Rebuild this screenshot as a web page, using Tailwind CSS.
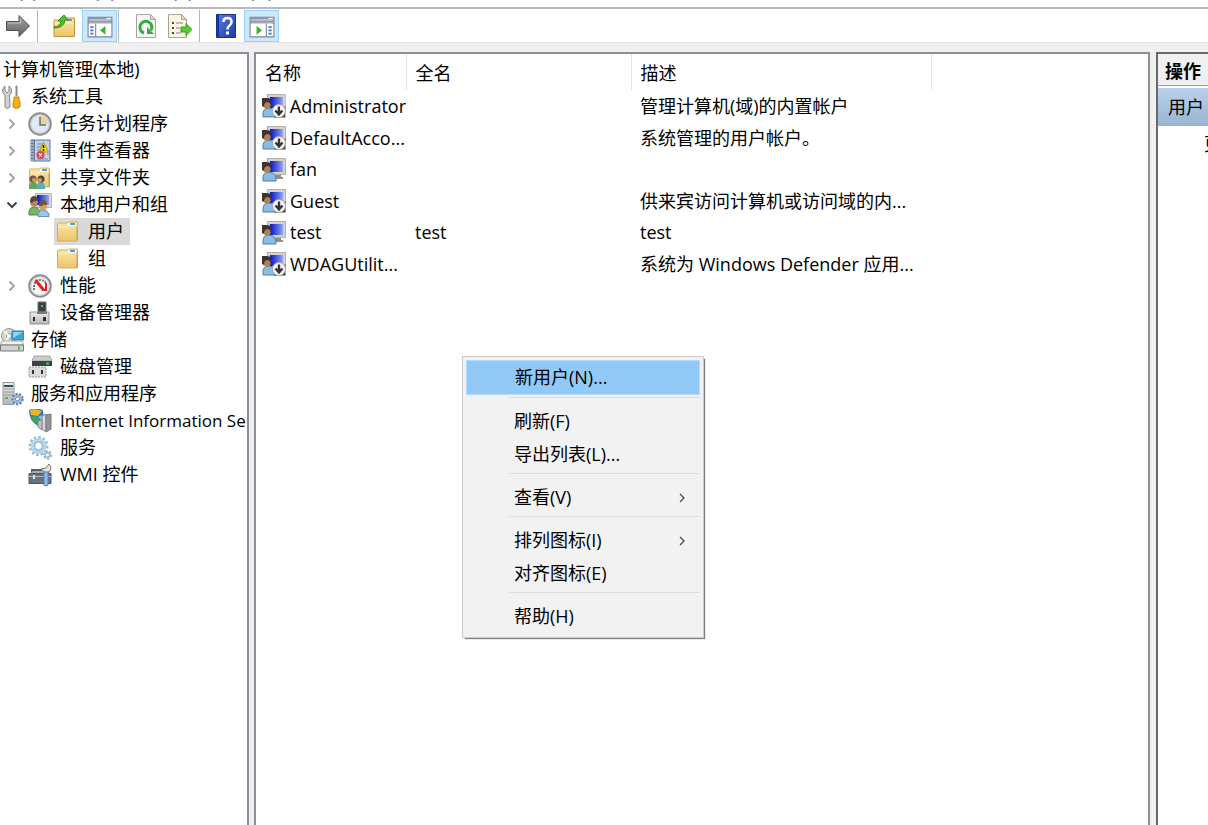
<!DOCTYPE html>
<html lang="zh-CN">
<head>
    <meta charset="UTF-8" />
    <meta name="viewport" content="width=device-width, initial-scale=1.0">
    <script src="https://cdn.jsdelivr.net/npm/@tailwindcss/browser@4"></script>
    <title>计算机管理</title>
</head>
<body class="h-screen flex flex-col overflow-hidden bg-[#f0f0f0] text-black text-[18px] leading-[27px] font-['Open_Sans','Noto_Sans_CJK_SC',sans-serif]">

<!-- Icons -->
<svg class="absolute size-0" aria-hidden="true">
    <defs>
        <linearGradient id="g-folder" x1="0" y1="0" x2="0" y2="1"><stop offset="0" stop-color="#fde9a8"/><stop offset="1" stop-color="#e9c46a"/></linearGradient>
        <linearGradient id="g-gray" x1="0" y1="0" x2="0" y2="1"><stop offset="0" stop-color="#a8a8a8"/><stop offset="1" stop-color="#5f5f5f"/></linearGradient>
        <linearGradient id="g-help" x1="0" y1="0" x2="1" y2="1"><stop offset="0" stop-color="#5a7ee0"/><stop offset="1" stop-color="#1c3aa8"/></linearGradient>
        <linearGradient id="g-screen" x1="0" y1="0" x2="1" y2="0"><stop offset="0" stop-color="#0a12c8"/><stop offset="1" stop-color="#8fa6f2"/></linearGradient>
        <linearGradient id="g-metal" x1="0" y1="0" x2="0" y2="1"><stop offset="0" stop-color="#ededed"/><stop offset="1" stop-color="#b4b6b8"/></linearGradient>
    </defs>
    <symbol id="folder" viewBox="0 0 24 24">
        <path d="M1.500 21V4q0-1 1-1h9l1-1h8q1 0 1 1v18z" fill="url(#g-folder)" stroke="#d3b05f"/>
        <path d="M12 3h8v3h-8z" fill="#fff"/><path d="M14 3h5v2h-5z" fill="#4a9be0"/>
        <path d="M2 7h9l2-2" stroke="#fff3c8" fill="none"/><path d="M21 7v13" stroke="#c79d49"/>
    </symbol>
    <symbol id="user" viewBox="0 0 24 24">
        <path d="M5 .5h18.500v16H8z" fill="#d6d3cb" stroke="#b3b0a8"/>
        <path d="M8 3h13v11H8z" fill="url(#g-screen)"/>
        <path d="M13 17h6v2h2v2h-8z" fill="#8f8f8f"/>
        <path d="M1 23v-4q0-4 5-5 7 0 8 6v3z" fill="#8cbbe4" stroke="#4d7fae"/>
        <ellipse cx="5" cy="10" rx="4" ry="5" fill="#b17f54"/>
        <path d="M0 12V4h5q5 0 5 6l-1 3q0-4-3-5-4 0-4 5z" fill="#39342f"/>
    </symbol>
    <symbol id="user-off" viewBox="0 0 24 24">
        <use href="#user"/>
        <path d="M23.500 12v11.500H12z" fill="#3c3c3c"/>
        <circle cx="17" cy="17" r="6.500" fill="#f7f7f7" stroke="#a9a9a9"/>
        <path d="M17 12.500v7M13.500 16.500l3.500 4 3.500-4" stroke="#333" stroke-width="2.400" fill="none"/>
    </symbol>
    <symbol id="users" viewBox="0 0 24 24">
        <path d="M7 .5h16.500v14H9z" fill="#d9d8d2" stroke="#b5b5ae"/>
        <path d="M9 2h12v10H9z" fill="url(#g-screen)"/>
        <path d="M1 22v-4q1-4 5-4t6 4v4z" fill="#78b467" stroke="#4f8d44"/>
        <ellipse cx="6" cy="9" rx="4" ry="5" fill="#b98858"/><path d="M2 9q0-6 4-6t4 5q-4-1-6 2z" fill="#5a4632"/>
        <path d="M10 23.500V21q1-4 5-4t6 4v2.500z" fill="#9cc6ea" stroke="#5d90bd"/>
        <ellipse cx="15" cy="13" rx="4" ry="5" fill="#d0a070"/><path d="M11 13q0-6 4-6t4 5q-4-1-5 1z" fill="#77552f"/>
    </symbol>
    <symbol id="tools" viewBox="0 0 24 24">
        <path d="M5 1v5l2 2 2-2V1q3 2 2.500 6-.5 2-2 3l.5 12q-3 3-5 0V10Q3 9 2.500 6 2.500 3 5 1z" fill="#d2d2d2" stroke="#858585"/>
        <path d="M16 1h1v10h-1z" fill="#999" stroke="#888"/>
        <path d="M14 12h5v3l1 2v5q-3.500 3-7 0v-5l1-2z" fill="#f2b01c" stroke="#c98804"/>
    </symbol>
    <symbol id="clock" viewBox="0 0 24 24">
        <circle cx="12" cy="12" r="10.800" fill="#e3ebf1" stroke="#8e8e8e" stroke-width="2"/>
        <circle cx="12" cy="12" r="9" fill="#dfeaf4" stroke="#c8ccd0"/>
        <path d="M12 12V3.500a8.500 8.500 0 0 1 8.500 8.500z" fill="#f3d394"/>
        <path d="M12 5v8h6" fill="none" stroke="#5d6f82" stroke-width="1.500"/>
    </symbol>
    <symbol id="events" viewBox="0 0 24 24">
        <path d="M3 1h19v21H3z" fill="#c4d1e8" stroke="#5a73a8"/><path d="M3 1h4v21H3z" fill="#66779c"/>
        <path d="M1 3h5M1 6h5M1 9h5M1 12h5M1 15h5M1 18h5M1 21h5" stroke="#d8dde6"/>
        <path d="M9 5h5M9 8h4M9 11h3M9 17h3M9 20h11M19 15h2" stroke="#7086b4"/>
        <path d="M15.500 3l5 10h-9z" fill="#f7d71d" stroke="#b79a0c"/><path d="M15.500 6v3M15.500 10v2" stroke="#222" stroke-width="1.500"/>
        <circle cx="12.500" cy="16" r="4" fill="#d8464c"/><path d="M11 14.500l3 3m0-3l-3 3" stroke="#fff" stroke-width="1.200"/>
    </symbol>
    <symbol id="share" viewBox="0 0 24 24">
        <use href="#folder"/>
        <path d="M1 23v-3q1-4 4-4t5 4v3z" fill="#5fa564"/><circle cx="5" cy="13" r="3.500" fill="#7a5234"/><circle cx="6" cy="14" r="2" fill="#cf9d70"/>
        <path d="M9 23v-3q1-4 4-4t4 4v3z" fill="#58b0bd"/><circle cx="13" cy="13" r="3.500" fill="#5a4434"/><circle cx="12" cy="14" r="2" fill="#cf9d70"/>
    </symbol>
    <symbol id="perf" viewBox="0 0 24 24">
        <circle cx="12" cy="12" r="10.800" fill="#f6f6f6" stroke="#8d8d8d" stroke-width="2"/>
        <circle cx="12" cy="12" r="9" fill="none" stroke="#cfcfcf"/>
        <path d="M6 16V11q2-5 6-5 6 0 6 5" fill="none" stroke="#6b7d70" stroke-width="2" stroke-dasharray="2 1"/>
        <path d="M7.500 6l8 10" stroke="#e21f26" stroke-width="3"/><path d="M14 16h4V9" fill="none" stroke="#e21f26" stroke-width="2"/>
    </symbol>
    <symbol id="device" viewBox="0 0 24 24">
        <path d="M10 1h8v11h-8z" fill="#3d3f41" stroke="#6d6f71"/><path d="M13 4h2v2h-2z" fill="#38d23a"/>
        <path d="M2 11h19v12H2z" fill="url(#g-metal)" stroke="#909294"/><path d="M9 11h10v2H9z" fill="#77797b"/>
        <path d="M5 16h2v4H5zM15 16h3v4h-3z" fill="#2e2e2e"/>
    </symbol>
    <symbol id="storage" viewBox="0 0 24 24">
        <circle cx="9" cy="8" r="7.500" fill="#d3dad6" stroke="#8f9894"/><circle cx="9" cy="8" r="2.500" fill="#fff" stroke="#8f9894"/><path d="M9 8l-5-5M9 8l-3 6" stroke="#f2f6e6" stroke-width="2"/>
        <path d="M12 3h12v9H12z" fill="#3ea4d2" stroke="#2a7ba5"/><path d="M13 4h10l-10 6z" fill="#8fd5f0"/>
        <path d="M2 13h20l2 4H0z" fill="#f0f0f0" stroke="#a9a9a9"/><path d="M.5 17h23v6H.5z" fill="#cfd1d3" stroke="#77797b"/>
        <path d="M18 18h2v4h-2z" fill="#4dd338"/>
    </symbol>
    <symbol id="disk" viewBox="0 0 24 24">
        <path d="M6 1h16l2 5H4z" fill="#c9cbcd" stroke="#a5a7a9"/><path d="M4 6h20v5H4z" fill="#3f4244"/><path d="M18 7.500h3v2h-3z" fill="#37d33a"/>
        <path d="M1 12h17v10H1z" fill="#dcdcdc" stroke="#9b9b9b" stroke-dasharray="2 1"/><path d="M4 15h2v4H4zM13 15h2v4h-2z" fill="#333"/>
    </symbol>
    <symbol id="services-apps" viewBox="0 0 24 24">
        <path d="M3 .5h11v22H3z" fill="url(#g-metal)" stroke="#8d979e"/><path d="M4 3h9v2H4z" fill="#34525c"/><path d="M4 7h9M4 10h9M4 13h9" stroke="#8b979e"/><path d="M5 15h3v2H5z" fill="#56b948"/>
        <circle cx="17.500" cy="17" r="5" fill="#a9c5e0" stroke="#5f87b3" stroke-width="2.500" stroke-dasharray="2 1.500"/><circle cx="17.500" cy="17" r="2" fill="#fff" stroke="#5f87b3"/>
    </symbol>
    <symbol id="iis" viewBox="0 0 24 24">
        <path d="M1 1q6-3 14 0l1 13-6 3Q1 12 1 1z" fill="#2476c4"/><path d="M2 1q6-2 12 1l-4 5-7-1z" fill="#f0b429"/><path d="M3 7l7 1 2 7-5-1q-3-3-4-7z" fill="#43a83d"/><path d="M10 8l4-2v6z" fill="#7cc6f2"/>
        <path d="M14 7l4-2v18l-4-3z" fill="#d7dadc" stroke="#85898c"/><path d="M18 6l5-1v15l-5 3z" fill="#8f9598" stroke="#777b7e"/><path d="M10 12l4-1v10l-4-3z" fill="#bec3c6" stroke="#85898c"/>
    </symbol>
    <symbol id="services" viewBox="0 0 24 24">
        <circle cx="10.500" cy="10" r="8.500" fill="none" stroke="#8fb9d9" stroke-width="3" stroke-dasharray="2.300 2.100"/>
        <circle cx="10.500" cy="10" r="6" fill="#fff" stroke="#b4d6ec" stroke-width="4"/><circle cx="10.500" cy="10" r="4" fill="#fff" stroke="#7aa5c8"/>
        <circle cx="19.500" cy="19" r="3" fill="#fff" stroke="#8db4d3" stroke-width="3" stroke-dasharray="2 1"/><circle cx="19.500" cy="19" r="2" fill="#fff" stroke="#8db4d3"/>
    </symbol>
    <symbol id="wmi" viewBox="0 0 24 24">
        <path d="M4 10V7h9v3" fill="none" stroke="#555d63" stroke-width="2"/><path d="M1 11l4-3h15l3 3z" fill="#a6b0b7"/>
        <path d="M1 10.500h22v10H1z" fill="#66737d" stroke="#4c565e"/><path d="M1 13.500h22" stroke="#aab4bb"/><path d="M5 12h2v4H5z" fill="#dfe4e7"/>
        <path d="M13 6l5-1 3-4 2 3-1 4-4 2z" fill="#e4e4e4" stroke="#777"/><path d="M16 9h4v13q-2 2-4 0z" fill="#8fc0ec" stroke="#4f81b3"/>
    </symbol>
    <symbol id="forward" viewBox="0 0 24 24">
        <path d="M.5 7.500H13V1.500L23.500 12 13 22.500v-6H.5z" fill="url(#g-gray)" stroke="#4f4f4f"/><path d="M2 9h12.500V5" fill="none" stroke="#c2c2c2"/>
    </symbol>
    <symbol id="folder-up" viewBox="0 0 24 24">
        <path d="M2 22.500V6h9l2-2h9.500v18.500z" fill="url(#g-folder)" stroke="#bf9440"/><path d="M15 5h5v2h-5z" fill="#5b9bd0"/><path d="M3 9h18" stroke="#fff0bd"/>
        <path d="M2 13q6 0 7-6H6l6-6 4 5h-3q-1 8-11 8z" fill="#4cc42c" stroke="#2f8f18"/>
    </symbol>
    <symbol id="pane-left" viewBox="0 0 24 24">
        <path d="M1 4h22v18H1z" fill="#fff" stroke="#7b8697"/><path d="M1 4h22v6H1z" fill="#8c98ab"/><path d="M2 6.500h20M2 9.500h20" stroke="#dfe4ea"/><path d="M18 5h4" stroke="#fff"/>
        <path d="M8 10v12" stroke="#7b8697"/><path d="M3 13h3M3 16h3M3 19h3" stroke="#3c78c8" stroke-width="1.500"/><path d="M17 12v8l-5-4z" fill="#3fae2a"/>
    </symbol>
    <symbol id="pane-right" viewBox="0 0 24 24">
        <path d="M1 4h22v18H1z" fill="#fff" stroke="#7b8697"/><path d="M1 4h22v6H1z" fill="#8c98ab"/><path d="M2 6.500h20M2 9.500h20" stroke="#dfe4ea"/><path d="M18 5h4" stroke="#fff"/>
        <path d="M16 10v12" stroke="#7b8697"/><path d="M18 13h3M18 16h3M18 19h3" stroke="#3c78c8" stroke-width="1.500"/><path d="M7 12v8l5-4z" fill="#3fae2a"/>
    </symbol>
    <symbol id="refresh" viewBox="0 0 24 24">
        <path d="M2.500.5h14l5 5v18h-19z" fill="#f6f6f6" stroke="#a4a4a4"/><path d="M16.500.5v5h5z" fill="#ddd" stroke="#a4a4a4"/>
        <path d="M10 19A6 6 0 1 1 17 16.500" fill="none" stroke="#2fae3c" stroke-width="3"/><path d="M13 20v-7l7 7z" fill="#2fae3c"/>
    </symbol>
    <symbol id="export" viewBox="0 0 24 24">
        <path d="M.5.5h13l5 5v18H.5z" fill="#fbf6e0" stroke="#a9a494"/><path d="M13.500.5v5h5z" fill="#e3dec8" stroke="#a9a494"/>
        <path d="M4 9h2M4 14h2M4 19h2" stroke="#444" stroke-width="2"/><path d="M8 9h7M8 14h4M8 19h5" stroke="#857fa0"/>
        <path d="M13 13h5V9.500l6 6-6 6V18h-5z" fill="#53cf34" stroke="#35a11d"/>
    </symbol>
    <symbol id="help" viewBox="0 0 24 24">
        <path d="M2.500.5h19v23h-19z" fill="url(#g-help)" stroke="#1b318f"/><path d="M3 1h2v22H3z" fill="#1b3698"/>
        <path d="M9.500 8q0-4 4-4t4 4q0 2-2 3.500t-2 4" fill="none" stroke="#fff" stroke-width="2.500"/><path d="M12 17.500h3v3h-3z" fill="#fff"/>
    </symbol>
    <symbol id="chevron" viewBox="0 0 12 12"><path d="M3.500 1.500L8 6l-4.500 4.500" fill="none" stroke="currentColor" stroke-width="1.800"/></symbol>
    <symbol id="chevron-down" viewBox="0 0 12 12"><path d="M1.500 3.500L6 8l4.500-4.500" fill="none" stroke="currentColor" stroke-width="2"/></symbol>
    <symbol id="chevron-thin" viewBox="0 0 12 12"><path d="M4 2l4 4-4 4" fill="none" stroke="currentColor" stroke-width="1.200"/></symbol>
</svg>

<!-- Menu bar -->
<nav class="h-[7px] shrink-0 overflow-hidden bg-white flex items-end gap-5 pb-1 -ml-[18px] text-[#666]">
    <button class="shrink-0 leading-6">文件(F)</button>
    <button class="shrink-0 leading-6">操作(A)</button>
    <button class="shrink-0 leading-6">查看(V)</button>
    <button class="shrink-0 leading-6">帮助(H)</button>
</nav>

<!-- Toolbar -->
<div class="shrink-0 h-9 bg-white border-t-2 border-t-[#b9b9b9] border-b border-b-[#e3e3e3] flex items-center pl-[6px]">
    <button aria-label="前进" class="mr-[7px]"><svg class="size-6"><use href="#forward"/></svg></button>
    <div class="w-px h-8 bg-[#b5b5b5] mr-[10px]"></div>
    <button aria-label="上移" class="h-8 px-1"><svg class="size-6"><use href="#folder-up"/></svg></button>
    <button aria-label="显示控制台树" class="h-8 w-[35px] ml-[2px] bg-[#cce8ff] border border-[#99d1ff] flex items-center justify-center"><svg class="size-[26px]"><use href="#pane-left"/></svg></button>
    <div class="w-px h-8 bg-[#b5b5b5] ml-px mr-[15px]"></div>
    <button aria-label="刷新" class="mr-[10px]"><svg class="size-6"><use href="#refresh"/></svg></button>
    <button aria-label="导出列表"><svg class="size-6"><use href="#export"/></svg></button>
    <div class="w-px h-8 bg-[#b5b5b5] ml-[7px] mr-[14px]"></div>
    <button aria-label="帮助"><svg class="size-6"><use href="#help"/></svg></button>
    <button aria-label="显示操作窗格" class="h-8 w-[35px] ml-[6px] bg-[#cce8ff] border border-[#99d1ff] flex items-center justify-center"><svg class="size-[26px]"><use href="#pane-right"/></svg></button>
</div>

<main class="flex-1 min-h-0 flex pt-[9px]">
    <!-- Console tree -->
    <aside class="w-[249px] shrink-0 mr-[5px] pt-[2px] bg-white border-t-2 border-r-2 border-[#8b9097] overflow-hidden whitespace-nowrap">
        <a href="#" class="block pl-[3px]">计算机管理(本地)</a>
        <a href="#" class="flex items-center gap-[7px]"><svg class="size-6"><use href="#tools"/></svg>系统工具</a>
        <ul>
            <li class="flex items-center pl-[6px]">
                <button aria-label="展开" class="mr-[10px] text-[#a0a0a0]"><svg class="size-3"><use href="#chevron"/></svg></button>
                <a href="#" class="flex items-center gap-2"><svg class="size-6"><use href="#clock"/></svg>任务计划程序</a>
            </li>
            <li class="flex items-center pl-[6px]">
                <button aria-label="展开" class="mr-[10px] text-[#a0a0a0]"><svg class="size-3"><use href="#chevron"/></svg></button>
                <a href="#" class="flex items-center gap-2"><svg class="size-6"><use href="#events"/></svg>事件查看器</a>
            </li>
            <li class="flex items-center pl-[6px]">
                <button aria-label="展开" class="mr-[10px] text-[#a0a0a0]"><svg class="size-3"><use href="#chevron"/></svg></button>
                <a href="#" class="flex items-center gap-2"><svg class="size-6"><use href="#share"/></svg>共享文件夹</a>
            </li>
            <li class="flex items-center pl-[6px]">
                <button aria-label="折叠" class="mr-[10px] text-[#404040]"><svg class="size-3"><use href="#chevron-down"/></svg></button>
                <a href="#" class="flex items-center gap-2"><svg class="size-6"><use href="#users"/></svg>本地用户和组</a>
            </li>
            <li class="flex pl-[54px]"><a href="#" class="flex items-center gap-2 pl-[2px] pr-[6px] bg-[#d9d9d9]"><svg class="size-6"><use href="#folder"/></svg>用户</a></li>
            <li class="flex pl-[54px]"><a href="#" class="flex items-center gap-2 pl-[2px] pr-[6px]"><svg class="size-6"><use href="#folder"/></svg>组</a></li>
            <li class="flex items-center pl-[6px]">
                <button aria-label="展开" class="mr-[10px] text-[#a0a0a0]"><svg class="size-3"><use href="#chevron"/></svg></button>
                <a href="#" class="flex items-center gap-2"><svg class="size-6"><use href="#perf"/></svg>性能</a>
            </li>
            <li class="pl-7"><a href="#" class="flex items-center gap-2"><svg class="size-6"><use href="#device"/></svg>设备管理器</a></li>
        </ul>
        <a href="#" class="flex items-center gap-[7px]"><svg class="size-6"><use href="#storage"/></svg>存储</a>
        <ul>
            <li class="pl-7"><a href="#" class="flex items-center gap-2"><svg class="size-6"><use href="#disk"/></svg>磁盘管理</a></li>
        </ul>
        <a href="#" class="flex items-center gap-[7px]"><svg class="size-6"><use href="#services-apps"/></svg>服务和应用程序</a>
        <ul>
            <li class="pl-7"><a href="#" class="flex items-center gap-2 text-[17px]"><svg class="size-6 shrink-0"><use href="#iis"/></svg>Internet Information Services</a></li>
            <li class="pl-7"><a href="#" class="flex items-center gap-2"><svg class="size-6"><use href="#services"/></svg>服务</a></li>
            <li class="pl-7"><a href="#" class="flex items-center gap-2"><svg class="size-6"><use href="#wmi"/></svg>WMI 控件</a></li>
        </ul>
    </aside>

    <!-- User list -->
    <section class="flex-1 min-w-0 mr-[6px] bg-white border-t-2 border-x-2 border-[#8b9097] overflow-hidden">
        <table class="w-full table-fixed text-left whitespace-nowrap">
            <thead>
                <tr class="h-9">
                    <th class="w-[150px] p-0 pt-[2px] pl-[9px] font-normal border-r border-[#e5e5e5]">名称</th>
                    <th class="w-[225px] p-0 pt-[2px] pl-[9px] font-normal border-r border-[#e5e5e5]">全名</th>
                    <th class="w-[300px] p-0 pt-[2px] pl-[9px] font-normal border-r border-[#e5e5e5]">描述</th>
                    <td></td>
                </tr>
            </thead>
            <tbody>
                <tr class="h-8">
                    <td class="pl-[6px]"><div class="flex items-center gap-1"><svg class="size-6"><use href="#user-off"/></svg>Administrator</div></td>
                    <td class="pl-[9px]"></td>
                    <td class="pl-[9px]">管理计算机(域)的内置帐户</td>
                </tr>
                <tr class="h-8">
                    <td class="pl-[6px]"><div class="flex items-center gap-1"><svg class="size-6"><use href="#user-off"/></svg>DefaultAcco...</div></td>
                    <td class="pl-[9px]"></td>
                    <td class="pl-[9px]">系统管理的用户帐户。</td>
                </tr>
                <tr class="h-[31px]">
                    <td class="pl-[6px]"><div class="flex items-center gap-1"><svg class="size-6"><use href="#user"/></svg>fan</div></td>
                    <td class="pl-[9px]"></td>
                    <td class="pl-[9px]"></td>
                </tr>
                <tr class="h-8">
                    <td class="pl-[6px]"><div class="flex items-center gap-1"><svg class="size-6"><use href="#user-off"/></svg>Guest</div></td>
                    <td class="pl-[9px]"></td>
                    <td class="pl-[9px]">供来宾访问计算机或访问域的内...</td>
                </tr>
                <tr class="h-[31px]">
                    <td class="pl-[6px]"><div class="flex items-center gap-1"><svg class="size-6"><use href="#user"/></svg>test</div></td>
                    <td class="pl-[9px]">test</td>
                    <td class="pl-[9px]">test</td>
                </tr>
                <tr class="h-8">
                    <td class="pl-[6px]"><div class="flex items-center gap-1"><svg class="size-6"><use href="#user-off"/></svg>WDAGUtilit...</div></td>
                    <td class="pl-[9px]"></td>
                    <td class="pl-[9px]">系统为 Windows Defender 应用...</td>
                </tr>
            </tbody>
        </table>
    </section>

    <!-- Actions -->
    <aside class="w-[52px] shrink-0 bg-white border-t-2 border-l-2 border-[#696969] overflow-hidden whitespace-nowrap">
        <h2 class="h-8 pl-[7px] leading-[34px] font-bold bg-[#f0f0f0] border-b border-[#a0a0a0]">操作</h2>
        <div class="h-[38px] mt-[2px] pl-[10px] leading-[38px] bg-linear-to-b from-[#b9d1ea] to-[#99b4d1]">用户</div>
        <a href="#" class="block pl-[46px] leading-9">更多操作</a>
    </aside>
</main>

<!-- Context menu -->
<div role="menu" class="absolute left-[462px] top-[356px] w-[242px] p-[3px] pb-1 flex flex-col bg-[#f2f2f2] border border-[#cccccc] shadow-[2px_2px_1px_-1px_#808080]">
    <button role="menuitem" class="h-[35px] pl-12 text-left bg-[#91c9f7] border border-[#b5dafa]">新用户(N)...</button>
    <hr class="mt-[2px] mb-[7px] ml-[43px] border-[#dcdcdc]">
    <button role="menuitem" class="h-[33px] pl-12 text-left">刷新(F)</button>
    <button role="menuitem" class="h-[33px] pl-12 text-left">导出列表(L)...</button>
    <hr class="mt-[2px] mb-[7px] ml-[43px] border-[#dcdcdc]">
    <button role="menuitem" class="h-[33px] pl-12 pr-3 flex items-center justify-between">查看(V)<svg class="size-3 text-[#444]"><use href="#chevron-thin"/></svg></button>
    <hr class="mt-[2px] mb-[7px] ml-[43px] border-[#dcdcdc]">
    <button role="menuitem" class="h-[33px] pl-12 pr-3 flex items-center justify-between">排列图标(I)<svg class="size-3 text-[#444]"><use href="#chevron-thin"/></svg></button>
    <button role="menuitem" class="h-[33px] pl-12 text-left">对齐图标(E)</button>
    <hr class="mt-[2px] mb-[7px] ml-[43px] border-[#dcdcdc]">
    <button role="menuitem" class="h-[33px] pl-12 text-left">帮助(H)</button>
</div>

</body>
</html>
